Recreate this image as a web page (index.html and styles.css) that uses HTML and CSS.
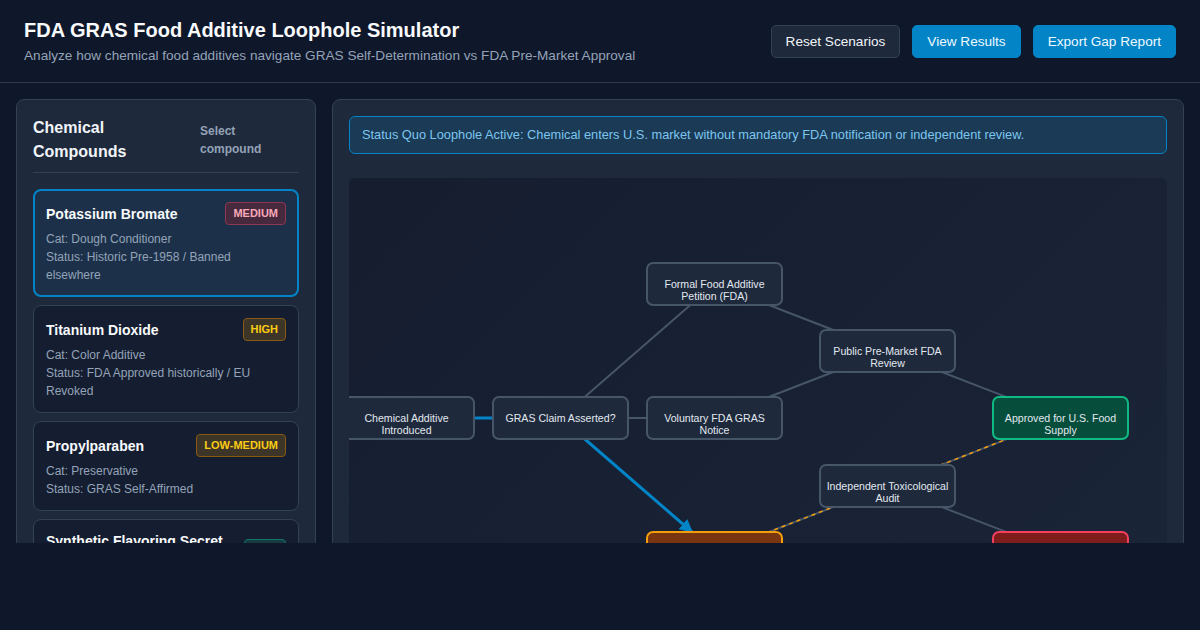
FILE: index.html
```html
<!DOCTYPE html>
<html lang="en">
<head>
    <meta charset="UTF-8">
    <meta name="viewport" content="width=device-width, initial-scale=1.0">
    <title>FDA GRAS Food Additive Loophole Simulator</title>
    <link rel="stylesheet" href="styles.css">
</head>
<body>

    <!-- Top bar -->
    <header class="topbar">
        <div class="titles">
            <h1>FDA GRAS Food Additive Loophole Simulator</h1>
            <p>Analyze how chemical food additives navigate GRAS Self-Determination vs FDA Pre-Market Approval</p>
        </div>
        <div class="actions">
            <button class="btn btn-dark">Reset Scenarios</button>
            <button class="btn btn-blue">View Results</button>
            <button class="btn btn-blue">Export Gap Report</button>
        </div>
    </header>

    <main class="layout">
        <!-- Compound list -->
        <section class="panel compounds">
            <div class="panel-head">
                <h2>Chemical Compounds</h2>
                <span>Select compound</span>
            </div>

            <div class="card active">
                <div class="card-top">
                    <h3>Potassium Bromate</h3>
                    <span class="badge badge-pink">MEDIUM</span>
                </div>
                <p>Cat: Dough Conditioner</p>
                <p>Status: Historic Pre-1958 / Banned elsewhere</p>
            </div>

            <div class="card">
                <div class="card-top">
                    <h3>Titanium Dioxide</h3>
                    <span class="badge badge-amber">HIGH</span>
                </div>
                <p>Cat: Color Additive</p>
                <p>Status: FDA Approved historically / EU Revoked</p>
            </div>

            <div class="card">
                <div class="card-top">
                    <h3>Propylparaben</h3>
                    <span class="badge badge-amber">LOW-MEDIUM</span>
                </div>
                <p>Cat: Preservative</p>
                <p>Status: GRAS Self-Affirmed</p>
            </div>

            <div class="card">
                <div class="card-top">
                    <h3>Synthetic Flavoring Secret Blend</h3>
                    <span class="badge badge-teal">LOW</span>
                </div>
                <p>Cat: Flavoring Agent</p>
                <p>Status: GRAS Self-Affirmed (Undisclosed)</p>
            </div>
        </section>

        <!-- Pathway diagram -->
        <section class="panel pathway">
            <div class="status">Status Quo Loophole Active: Chemical enters U.S. market without mandatory FDA notification or independent review.</div>

            <div class="diagram">
                <svg width="818" height="420" viewBox="0 0 818 420">
                    <defs>
                        <marker id="arrow" viewBox="0 0 10 10" refX="9" refY="5" markerWidth="4.5" markerHeight="4.5" orient="auto">
                            <path d="M0 0 L10 5 L0 10 z" fill="#0284c7"/>
                        </marker>
                    </defs>

                    <!-- edges -->
                    <g class="edge">
                        <line x1="211.5" y1="240" x2="365.5" y2="240"/>
                        <line x1="211.5" y1="240" x2="365.5" y2="106"/>
                        <line x1="365.5" y1="106" x2="538.5" y2="173"/>
                        <line x1="365.5" y1="240" x2="538.5" y2="173"/>
                        <line x1="538.5" y1="173" x2="711.5" y2="240"/>
                        <line x1="365.5" y1="375" x2="538.5" y2="308"/>
                        <line x1="538.5" y1="308" x2="711.5" y2="240"/>
                        <line x1="538.5" y1="308" x2="711.5" y2="375"/>
                    </g>
                    <g class="edge-dash">
                        <line x1="365.5" y1="375" x2="538.5" y2="308"/>
                        <line x1="538.5" y1="308" x2="711.5" y2="240"/>
                    </g>
                    <g class="edge-active">
                        <line x1="57.5" y1="240" x2="211.5" y2="240"/>
                        <line x1="211.5" y1="240" x2="343" y2="354" marker-end="url(#arrow)"/>
                    </g>

                    <!-- nodes -->
                    <g class="node">
                        <rect x="-10" y="219" width="135" height="42" rx="6"/>
                        <text x="57.5" y="244"><tspan x="57.5">Chemical Additive</tspan><tspan x="57.5" dy="11.5">Introduced</tspan></text>
                    </g>
                    <g class="node">
                        <rect x="144" y="219" width="135" height="42" rx="6"/>
                        <text x="211.5" y="244">GRAS Claim Asserted?</text>
                    </g>
                    <g class="node">
                        <rect x="298" y="219" width="135" height="42" rx="6"/>
                        <text x="365.5" y="244"><tspan x="365.5">Voluntary FDA GRAS</tspan><tspan x="365.5" dy="11.5">Notice</tspan></text>
                    </g>
                    <g class="node">
                        <rect x="298" y="85" width="135" height="42" rx="6"/>
                        <text x="365.5" y="110"><tspan x="365.5">Formal Food Additive</tspan><tspan x="365.5" dy="11.5">Petition (FDA)</tspan></text>
                    </g>
                    <g class="node">
                        <rect x="471" y="152" width="135" height="42" rx="6"/>
                        <text x="538.5" y="177"><tspan x="538.5">Public Pre-Market FDA</tspan><tspan x="538.5" dy="11.5">Review</tspan></text>
                    </g>
                    <g class="node node-green">
                        <rect x="644" y="219" width="135" height="42" rx="6"/>
                        <text x="711.5" y="244"><tspan x="711.5">Approved for U.S. Food</tspan><tspan x="711.5" dy="11.5">Supply</tspan></text>
                    </g>
                    <g class="node">
                        <rect x="471" y="287" width="135" height="42" rx="6"/>
                        <text x="538.5" y="312"><tspan x="538.5">Independent Toxicological</tspan><tspan x="538.5" dy="11.5">Audit</tspan></text>
                    </g>
                    <g class="node node-orange">
                        <rect x="298" y="354" width="135" height="42" rx="6"/>
                        <text x="365.5" y="379"><tspan x="365.5">Self-Affirmed GRAS</tspan><tspan x="365.5" dy="11.5">Market Entry</tspan></text>
                    </g>
                    <g class="node node-red">
                        <rect x="644" y="354" width="135" height="42" rx="6"/>
                        <text x="711.5" y="379"><tspan x="711.5">Rejected / Removed</tspan><tspan x="711.5" dy="11.5">from Market</tspan></text>
                    </g>
                </svg>
            </div>
        </section>
    </main>

</body>
</html>
```

FILE: styles.css
```css
* {
    box-sizing: border-box;
}
body {
    margin: 0;
    background-color: #0f172a;
    color: #f1f5f9;
    font-family: "Liberation Sans", Arial, sans-serif;
}

/* top bar */
.topbar {
    display: flex;
    justify-content: space-between;
    align-items: center;
    padding: 16px 24px;
    height: 83px;
    border-bottom: 1px solid #2b3a4c;
}
.titles h1 {
    margin: 0;
    font-size: 20px;
    line-height: 28px;
    color: #f8fafc;
}
.titles p {
    margin: 2px 0 0;
    font-size: 13.6px;
    line-height: 20px;
    color: #94a3b8;
}
.actions {
    display: flex;
    gap: 12px;
}
.btn {
    font-family: inherit;
    font-size: 13.6px;
    line-height: 15px;
    padding: 8px 14px;
    border-radius: 5px;
    border: 1px solid transparent;
    color: #f1f5f9;
    cursor: pointer;
}
.btn-dark { background: #1e293b; border-color: #334155; }
.btn-blue { background: #0284c7; border-color: #0284c7; color: #f0f9ff; }

/* layout */
.layout {
    display: grid;
    grid-template-columns: 300px 1fr;
    gap: 16px;
    padding: 16px;
    height: 460px;
    overflow: hidden;
}
.panel {
    background: #1e293b;
    border: 1px solid #334155;
    border-radius: 8px;
    padding: 16px;
}

/* compound list */
.panel-head {
    display: flex;
    justify-content: space-between;
    align-items: center;
    padding-bottom: 8px;
    border-bottom: 1px solid #334155;
    margin-bottom: 16px;
}
.panel-head h2 {
    margin: 0;
    width: 120px;
    font-size: 16px;
    line-height: 24px;
    color: #f1f5f9;
}
.panel-head span {
    width: 72px;
    margin-right: 27px;
    font-size: 12px;
    font-weight: bold;
    line-height: 18px;
    color: #94a3b8;
}
.card {
    background: #151e30;
    border: 1px solid #334155;
    border-radius: 8px;
    padding: 12px;
    margin-bottom: 8px;
}
.card.active {
    background: #1c3149;
    border: 2px solid #0284c7;
    padding: 11px;
}
.card-top {
    display: flex;
    justify-content: space-between;
    align-items: center;
    gap: 10px;
    margin-bottom: 5px;
}
.card h3 {
    margin: 0;
    font-size: 14px;
    line-height: 18px;
    color: #f8fafc;
}
.card p {
    margin: 0;
    font-size: 12px;
    line-height: 18px;
    color: #94a3b8;
}
.badge {
    flex-shrink: 0;
    font-size: 11px;
    font-weight: bold;
    line-height: 15px;
    padding: 3px 7px;
    border-radius: 4px;
    border: 1px solid;
}
.badge-pink { background: #47293e; border-color: #8f3650; color: #f9a8b8; }
.badge-amber { background: #3d3527; border-color: #8a5a12; color: #facc15; }
.badge-teal { background: #173b3e; border-color: #0f766e; color: #5eead4; }

/* pathway */
.status {
    background: #1b3a56;
    border: 1px solid #0284c7;
    border-radius: 6px;
    padding: 10px 12px;
    font-size: 12.8px;
    line-height: 16px;
    color: #7cc6ee;
}
.diagram {
    margin-top: 24px;
    height: 420px;
    border-radius: 6px;
    overflow: hidden;
    background: linear-gradient(135deg, #151d2f 0%, #1b2538 100%);
}
.diagram svg {
    display: block;
}
.edge line { stroke: #475569; stroke-width: 2; }
.edge-dash line { stroke: #f59e0b; stroke-width: 1.5; stroke-dasharray: 4 4; }
.edge-active line { stroke: #0284c7; stroke-width: 3; }
.node rect { fill: #1e293b; stroke: #475569; stroke-width: 2; }
.node text {
    fill: #e2e8f0;
    font-family: "Liberation Sans", Arial, sans-serif;
    font-size: 10.6px;
    text-anchor: middle;
}
.node-green rect { fill: #064e3b; stroke: #10b981; }
.node-orange rect { fill: #78350f; stroke: #f59e0b; }
.node-red rect { fill: #7f1d1d; stroke: #f43f5e; }
```
